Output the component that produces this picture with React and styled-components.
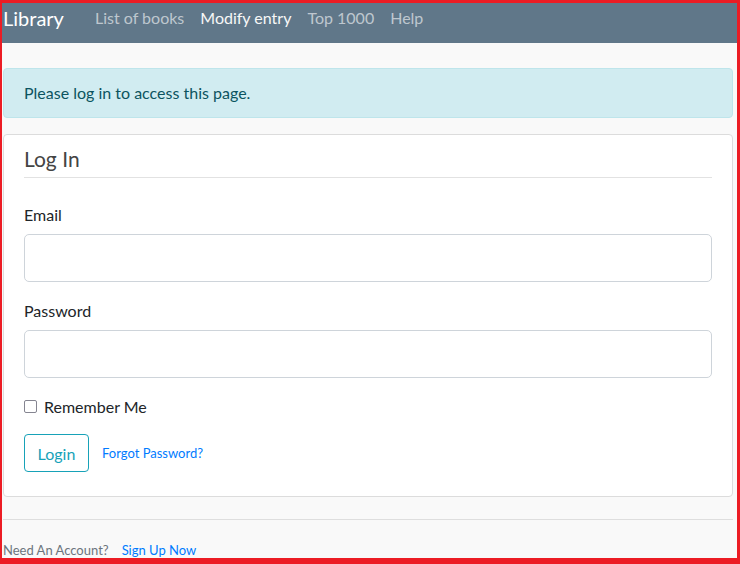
import React from "react";
import styled, { createGlobalStyle } from "styled-components";

// -- 전체 페이지
const GlobalStyle = createGlobalStyle`
  html, body {
    margin: 0;
    padding: 0;
  }
  body {
    background: #ec1c24;
    font-family: Lato, "Open Sans", sans-serif;
    font-size: 16px;
    color: #212529;
  }
  * {
    box-sizing: border-box;
  }
`;

const Frame = styled.div`
  margin: 3px 3px 6px 2px;
  height: 555px;
  background: #f9f9f9;
  overflow: hidden;
`;

// -- 상단 네비게이션
const Navbar = styled.nav`
  display: flex;
  align-items: center;
  height: 40px;
  padding: 0 0 11px 1px;
  background: #607789;
`;

const Brand = styled.a`
  flex-shrink: 0;
  width: 84px;
  font-size: 20px;
  line-height: 30px;
  margin-top: 1px;
  color: #fff;
`;

const NavLink = styled.a`
  padding: 0 8px;
  line-height: 24px;
  color: ${(p) => (p.$active ? "#f7f7f7" : "rgba(255, 255, 255, 0.6)")};
`;

// -- 본문
const Main = styled.main`
  padding: 25px 4px 0 1px;
`;

const Alert = styled.div`
  padding: 12px 20px;
  margin-bottom: 16px;
  line-height: 24px;
  color: #0c5460;
  background: #d1ecf1;
  border: 1px solid #bee5eb;
  border-radius: 4px;
`;

const Card = styled.div`
  padding: 10px 20px 24px;
  background: #fff;
  border: 1px solid #dcdcdc;
  border-radius: 4px;
`;

const Legend = styled.div`
  font-size: 21px;
  line-height: 25px;
  padding-top: 1px;
  padding-bottom: 6px;
  margin-bottom: 24px;
  color: #444;
  border-bottom: 1px solid #e2e2e2;
`;

const FormGroup = styled.div`
  margin-bottom: 16px;
`;

const Label = styled.label`
  display: block;
  padding-top: 1px;
  height: 24px;
  margin-bottom: 8px;
  line-height: 24px;
`;

const Input = styled.input`
  display: block;
  width: 100%;
  height: 48px;
  padding: 8px 16px;
  font: inherit;
  font-size: 20px;
  border: 1px solid #ced4da;
  border-radius: 5px;
  background: #fff;
`;

const CheckRow = styled.label`
  display: flex;
  align-items: center;
  height: 24px;
  padding-top: 1px;
  margin-bottom: 16px;
  line-height: 24px;
`;

const Checkbox = styled.input`
  appearance: none;
  width: 13px;
  height: 13px;
  margin: 0 7px 0 0;
  border: 1px solid #858591;
  border-radius: 2px;
  background: #fff;
`;

const Actions = styled.div`
  display: flex;
  align-items: center;
`;

const OutlineButton = styled.button`
  min-width: 65px;
  height: 38px;
  padding: 7px 12px 5px;
  font: inherit;
  font-size: 16px;
  line-height: 24px;
  color: #17a2b8;
  background: transparent;
  border: 1px solid #17a2b8;
  border-radius: 4px;
`;

const SmallLink = styled.a`
  margin-left: ${(p) => p.$gap || 0}px;
  font-size: 13px;
  color: #007bff;
`;

// -- 하단
const Footer = styled.div`
  margin-top: 22px;
  padding-top: 20px;
  border-top: 1px solid #dedede;
  font-size: 13px;
  line-height: 20px;
`;

const Muted = styled.span`
  color: #6c757d;
`;

function App() {
  return (
    <>
      <GlobalStyle />
      <Frame>
        <Navbar>
          <Brand>Library</Brand>
          <NavLink>List of books</NavLink>
          <NavLink $active>Modify entry</NavLink>
          <NavLink>Top 1000</NavLink>
          <NavLink>Help</NavLink>
        </Navbar>
        <Main>
          <Alert>Please log in to access this page.</Alert>
          <Card>
            <Legend>Log In</Legend>
            <FormGroup>
              <Label>Email</Label>
              <Input type="text" />
            </FormGroup>
            <FormGroup>
              <Label>Password</Label>
              <Input type="password" />
            </FormGroup>
            <CheckRow>
              <Checkbox type="checkbox" />
              Remember Me
            </CheckRow>
            <Actions>
              <OutlineButton>Login</OutlineButton>
              <SmallLink $gap={13}>Forgot Password?</SmallLink>
            </Actions>
          </Card>
          <Footer>
            <Muted>Need An Account?</Muted>
            <SmallLink $gap={13}>Sign Up Now</SmallLink>
          </Footer>
        </Main>
      </Frame>
    </>
  );
}

export default App;
